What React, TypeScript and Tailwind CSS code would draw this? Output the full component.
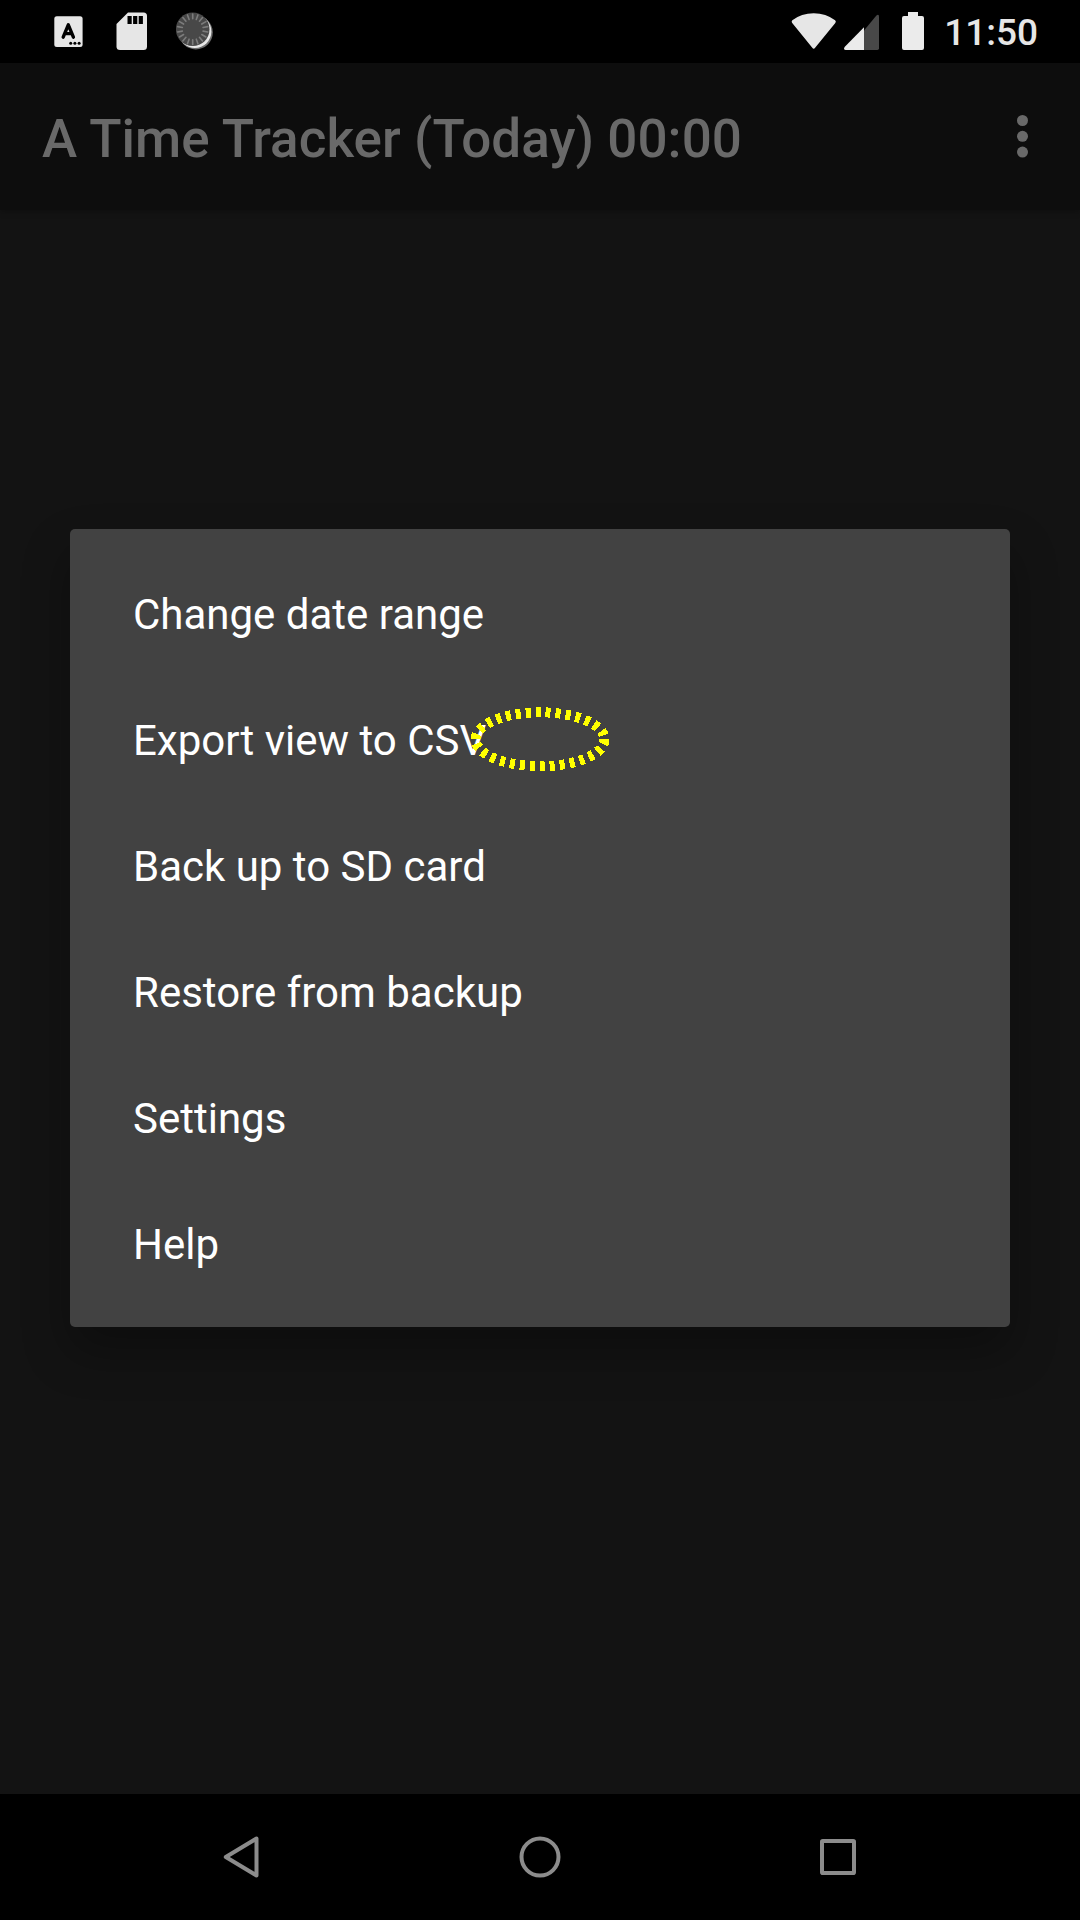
import React from "react";

const menuItems = [
  "Change date range",
  "Export view to CSV",
  "Back up to SD card",
  "Restore from backup",
  "Settings",
  "Help",
];

const ticks = Array.from({ length: 18 }, (_, i) => i * 20);

function KeyboardIcon() {
  return (
    <svg width="30" height="32" viewBox="0 0 30 32" className="shrink-0">
      <rect x="0.3" y="0.3" width="28.3" height="30.6" rx="2.5" fill="#e6e6e6" />
      <path d="M9.2 21.2 L14.3 8.8 L19.4 21.2 M11 17.6 H17.6" fill="none" stroke="#000" strokeWidth="3.4" strokeLinecap="round" strokeLinejoin="round" />
      <circle cx="16.7" cy="27.3" r="1.5" fill="#000" />
      <circle cx="20.9" cy="27.3" r="1.5" fill="#000" />
      <circle cx="25.1" cy="27.3" r="1.5" fill="#000" />
    </svg>
  );
}

function SdCardIcon() {
  return (
    <svg width="32" height="39" viewBox="0 0 32 39" className="shrink-0">
      <path d="M12 0.5 H27.5 Q31 0.5 31 4 V34.500 Q31 38 27.500 38 H4 Q0.5 38 0.5 34.500 V12 Z" fill="#e6e6e6" />
      <path d="M11.500 4h4.200v8h-4.200z M17.100 4h4.200v8h-4.200z M22.700 4h4.200v8h-4.200z" fill="#000" />
    </svg>
  );
}

function SpinnerIcon() {
  return (
    <svg width="40" height="40" viewBox="0 0 40 40" className="shrink-0">
      <circle cx="19.800" cy="20.400" r="17" fill="#6d6d6d" />
      <circle cx="18.900" cy="19.500" r="16.500" fill="#e8e8e8" />
      <circle cx="16.700" cy="17.300" r="16.800" fill="#484848" />
      {ticks.map((a) => (
        <path key={a} d="M16.700 2v4.800" stroke="#7c7c7c" strokeWidth="1.600" strokeLinecap="round" transform={`rotate(${a} 16.7 17.3)`} />
      ))}
    </svg>
  );
}

function StatusBar() {
  return (
    <header className="flex h-[63px] shrink-0 items-start bg-black">
      <div className="ml-[54px] mt-4">
        <KeyboardIcon />
      </div>
      <div className="ml-8 mt-3">
        <SdCardIcon />
      </div>
      <div className="ml-[28px] mt-3">
        <SpinnerIcon />
      </div>
      <div className="ml-auto mr-[42px] flex items-start">
        <svg width="133" height="40" viewBox="0 0 133 40" className="mt-3">
          <path d="M1.300 8.200 Q0 9.600 1.200 11 L21.300 35.800 Q22.700 37.500 24.100 35.800 L44.300 11 Q45.500 9.600 44.100 8.300 Q35 1.200 22.700 1.200 Q10.400 1.200 1.300 8.200Z" fill="#e6e6e6" />
          <path d="M73 18.500 L85.200 3.800 Q88 1.300 88 5 V36.300 Q88 38 86.300 38 H73Z" fill="#484848" />
          <path d="M73 15.200 V38 H54.700 Q52 37.500 53.600 35 Z" fill="#ebebeb" />
          <path d="M117 0h10v4h4q2 0 2 2v30q0 2-2 2h-18q-2 0-2-2v-30q0-2 2-2h4z" fill="#ebebeb" />
        </svg>
        <span className="mt-[11px] w-[114px] text-right text-[37px] leading-[44px] font-medium text-[#e6e6e6]">11:50</span>
      </div>
    </header>
  );
}

function AppBar() {
  return (
    <div className="z-10 flex h-[147px] shrink-0 items-center justify-between bg-[#0d0d0d] pl-[42px] pr-[52px] shadow-[0_2px_6px_rgba(0,0,0,0.25)]">
      <h1 className="pt-1 text-[53px] leading-[62px] font-medium tracking-[0.05px] text-[#696969]">A Time Tracker (Today) 00:00</h1>
      <button aria-label="More options">
        <svg width="11" height="43" viewBox="0 0 11 43" fill="#696969">
          <circle cx="5.500" cy="5.500" r="5.500" />
          <circle cx="5.500" cy="21.300" r="5.500" />
          <circle cx="5.500" cy="37.100" r="5.500" />
        </svg>
      </button>
    </div>
  );
}

function MenuDialog() {
  return (
    <div role="menu" className="relative mx-[70px] mt-[319px] rounded-[5px] bg-[#424242] py-[21px] shadow-[0_24px_48px_rgba(0,0,0,0.3)]">
      {menuItems.map((label) => (
        <div key={label} role="menuitem" className="flex h-[126px] items-center px-[63px] pt-1 text-[42px] leading-[50px] text-white">
          {label}
        </div>
      ))}
      <svg width="142" height="66" viewBox="0 0 142 66" className="absolute left-[399px] top-[177px]">
        <ellipse cx="71" cy="33.300" rx="64.500" ry="27" fill="none" stroke="#ffff00" strokeWidth="10" strokeDasharray="5 5" shapeRendering="crispEdges" />
      </svg>
    </div>
  );
}

function NavigationBar() {
  return (
    <nav className="flex h-[126px] shrink-0 items-center justify-between bg-black pl-[220px] pr-[220px]">
      <svg width="44" height="44" viewBox="0 0 44 44" fill="none" stroke="#8c8c8c" strokeWidth="4" strokeLinejoin="round">
        <path d="M36.500 3.500 V40.500 L5.800 22 Z" />
      </svg>
      <svg width="44" height="44" viewBox="0 0 44 44" fill="none" stroke="#8c8c8c" strokeWidth="4">
        <circle cx="22" cy="22" r="18.500" />
      </svg>
      <svg width="44" height="44" viewBox="0 0 44 44" fill="none" stroke="#8c8c8c" strokeWidth="4">
        <rect x="6" y="6" width="32" height="32" rx="0.800" />
      </svg>
    </nav>
  );
}

export default function App() {
  return (
    <div className="flex h-[1920px] w-[1080px] flex-col overflow-hidden bg-[#131313] font-[Roboto,sans-serif]">
      <StatusBar />
      <AppBar />
      <main className="flex-1">
        <MenuDialog />
      </main>
      <NavigationBar />
    </div>
  );
}
